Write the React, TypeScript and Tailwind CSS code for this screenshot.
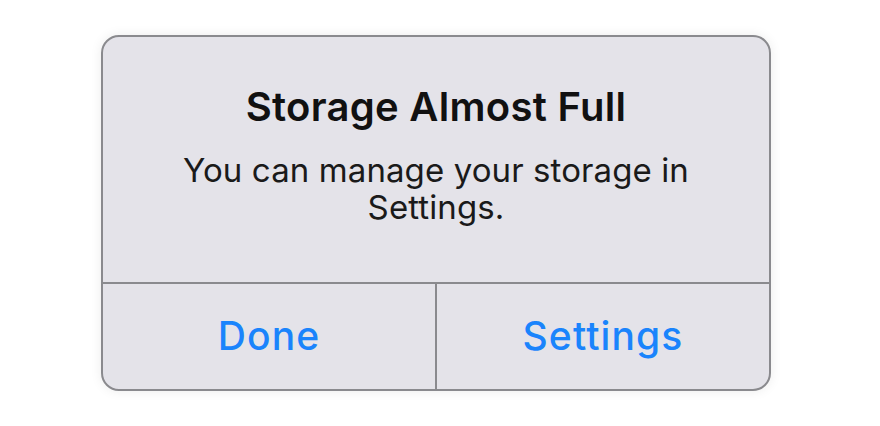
export default function App() {
  return (
    <div className="w-[880px] h-[426px] bg-white overflow-hidden" style={{ fontFamily: 'Inter, "Noto Sans", sans-serif' }}>
      <div className="ml-[101px] mt-[35px] w-[670px] h-[356px] rounded-[18px] border-2 border-[#8a8a8e] bg-[#e4e3e9] shadow-[0_0_12px_rgba(0,0,0,0.08)] flex flex-col overflow-hidden">
        <div className="h-[245px] flex flex-col items-center pt-[46px] text-center">
          <h1 className="text-[40px] leading-[48px] font-semibold text-[#111] tracking-[0.3px]">Storage Almost Full</h1>
          <p className="mt-[21px] text-[33px] leading-[37px] text-[#1a1a1a] w-[560px] tracking-[0.1px]">
            You can manage your storage in Settings.
          </p>
        </div>
        <div className="flex-1 flex border-t-2 border-[#8a8a8e]">
          <button className="flex-1 flex items-center justify-center text-[39px] text-[#1a84fc] font-medium tracking-[1.1px]">Done</button>
          <div className="w-[2px] bg-[#8a8a8e]" />
          <button className="flex-1 flex items-center justify-center text-[39px] text-[#1a84fc] font-medium tracking-[1.1px]">Settings</button>
        </div>
      </div>
    </div>
  );
}
